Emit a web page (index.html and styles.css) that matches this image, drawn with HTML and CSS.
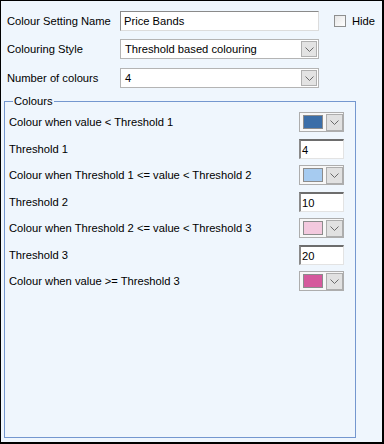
FILE: index.html
```html
<!DOCTYPE html>
<html>
<head>
<meta charset="utf-8">
<link rel="stylesheet" href="styles.css">
</head>
<body>
<div class="window">
  <div class="top">
    <div class="row r1">
      <span class="label">Colour Setting Name</span>
      <div class="textbox wide"><span>Price Bands</span></div>
      <label class="check"><span class="box"></span><span>Hide</span></label>
    </div>
    <div class="row r2">
      <span class="label">Colouring Style</span>
      <div class="combo wide"><span>Threshold based colouring</span><span class="btn"><svg width="9" height="5" viewBox="0 0 9 5"><path d="M0.5 0.5 L4.5 4.5 L8.5 0.5" fill="none" stroke="#6a6a6a" stroke-width="1"/></svg></span></div>
    </div>
    <div class="row r3">
      <span class="label">Number of colours</span>
      <div class="combo wide"><span>4</span><span class="btn"><svg width="9" height="5" viewBox="0 0 9 5"><path d="M0.5 0.5 L4.5 4.5 L8.5 0.5" fill="none" stroke="#6a6a6a" stroke-width="1"/></svg></span></div>
    </div>
  </div>
  <fieldset class="group">
    <legend>Colours</legend>
    <div class="grow c">
      <span>Colour when value &lt; Threshold 1</span>
      <div class="cpick"><span class="swatch s1"></span><span class="cbtn"><svg width="9" height="5" viewBox="0 0 9 5"><path d="M0.5 0.5 L4.5 4.5 L8.5 0.5" fill="none" stroke="#6a6a6a" stroke-width="1"/></svg></span></div>
    </div>
    <div class="grow t">
      <span>Threshold 1</span>
      <div class="num">4</div>
    </div>
    <div class="grow c">
      <span>Colour when Threshold 1 &lt;= value &lt; Threshold 2</span>
      <div class="cpick"><span class="swatch s2"></span><span class="cbtn"><svg width="9" height="5" viewBox="0 0 9 5"><path d="M0.5 0.5 L4.5 4.5 L8.5 0.5" fill="none" stroke="#6a6a6a" stroke-width="1"/></svg></span></div>
    </div>
    <div class="grow t">
      <span>Threshold 2</span>
      <div class="num">10</div>
    </div>
    <div class="grow c">
      <span>Colour when Threshold 2 &lt;= value &lt; Threshold 3</span>
      <div class="cpick"><span class="swatch s3"></span><span class="cbtn"><svg width="9" height="5" viewBox="0 0 9 5"><path d="M0.5 0.5 L4.5 4.5 L8.5 0.5" fill="none" stroke="#6a6a6a" stroke-width="1"/></svg></span></div>
    </div>
    <div class="grow t">
      <span>Threshold 3</span>
      <div class="num">20</div>
    </div>
    <div class="grow c">
      <span>Colour when value &gt;= Threshold 3</span>
      <div class="cpick"><span class="swatch s4"></span><span class="cbtn"><svg width="9" height="5" viewBox="0 0 9 5"><path d="M0.5 0.5 L4.5 4.5 L8.5 0.5" fill="none" stroke="#6a6a6a" stroke-width="1"/></svg></span></div>
    </div>
  </fieldset>
</div>
</body>
</html>
```

FILE: styles.css
```css
html, body {
  margin: 0;
  padding: 0;
}
body {
  font-family: "Liberation Sans", Arial, sans-serif;
  font-size: 11.2px;
  color: #000;
}
.window {
  box-sizing: border-box;
  width: 384px;
  height: 444px;
  background: #eff6fd;
  border-top: 1px solid #000;
  border-left: 1px solid #000;
  border-right: 2px solid #000;
  border-bottom: 2px solid #000;
  padding: 10px 0 0 3px;
}
.top {
  padding-left: 3px;
}
.row {
  display: flex;
  align-items: center;
  height: 20px;
}
.r1 { margin-bottom: 8px; }
.r2 { margin-bottom: 9px; }
.label {
  width: 113px;
  flex: none;
}
.textbox {
  box-sizing: border-box;
  height: 20px;
  background: #fff;
  border: 1px solid;
  border-color: #8a8a8a #dcdcdc #dcdcdc #8a8a8a;
  display: flex;
  align-items: center;
  padding-left: 3px;
}
.wide {
  width: 199px;
}
.check {
  display: flex;
  align-items: center;
  margin-left: 15px;
  gap: 6px;
}
.box {
  box-sizing: border-box;
  width: 12px;
  height: 12px;
  border: 1px solid #8e8f8f;
  background: linear-gradient(135deg, #e6e6e6, #ffffff);
}
.combo {
  box-sizing: border-box;
  height: 20px;
  background: #fff;
  border: 1px solid #b4b4b4;
  display: flex;
  align-items: center;
  justify-content: space-between;
  padding: 1px 1px 1px 4px;
}
.btn {
  box-sizing: border-box;
  width: 16px;
  height: 16px;
  background: #e3e3e3;
  border: 1px solid #b0b0b0;
  display: flex;
  align-items: center;
  justify-content: center;
}
.group {
  box-sizing: border-box;
  width: 352px;
  height: 344px;
  margin: 6px 0 0 0;
  padding: 4px 11px 0 4px;
  border: 1px solid #7497cf;
}
.group legend {
  padding: 0 1px;
  margin-left: 4px;
  line-height: 14px;
}
.grow {
  display: flex;
  align-items: center;
  justify-content: space-between;
  height: 20px;
}
.grow.c { margin-bottom: 7px; }
.grow.t { margin-bottom: 6px; }
.cpick {
  box-sizing: border-box;
  width: 45px;
  height: 20px;
  border: 1px solid #adadad;
  background: #f7f7f7;
  display: flex;
  align-items: center;
  padding-left: 3px;
  gap: 3px;
}
.swatch {
  box-sizing: border-box;
  width: 20px;
  height: 14px;
  border: 1px solid #8c8c8c;
}
.s1 { background: #3b6ea8; }
.s2 { background: #a6cbf0; }
.s3 { background: #f3c9de; }
.s4 { background: #d5599c; }
.cbtn {
  box-sizing: border-box;
  width: 17px;
  height: 17px;
  background: #e1e1e1;
  border: 1px solid #adadad;
  display: flex;
  align-items: center;
  justify-content: center;
}
.num {
  box-sizing: border-box;
  width: 45px;
  height: 20px;
  background: #fff;
  border-style: solid;
  border-width: 2px 1px 1px 2px;
  border-color: #6d6d6d #e3e3e3 #e3e3e3 #8a8a8a;
  padding-left: 1px;
  display: flex;
  align-items: center;
}
```
